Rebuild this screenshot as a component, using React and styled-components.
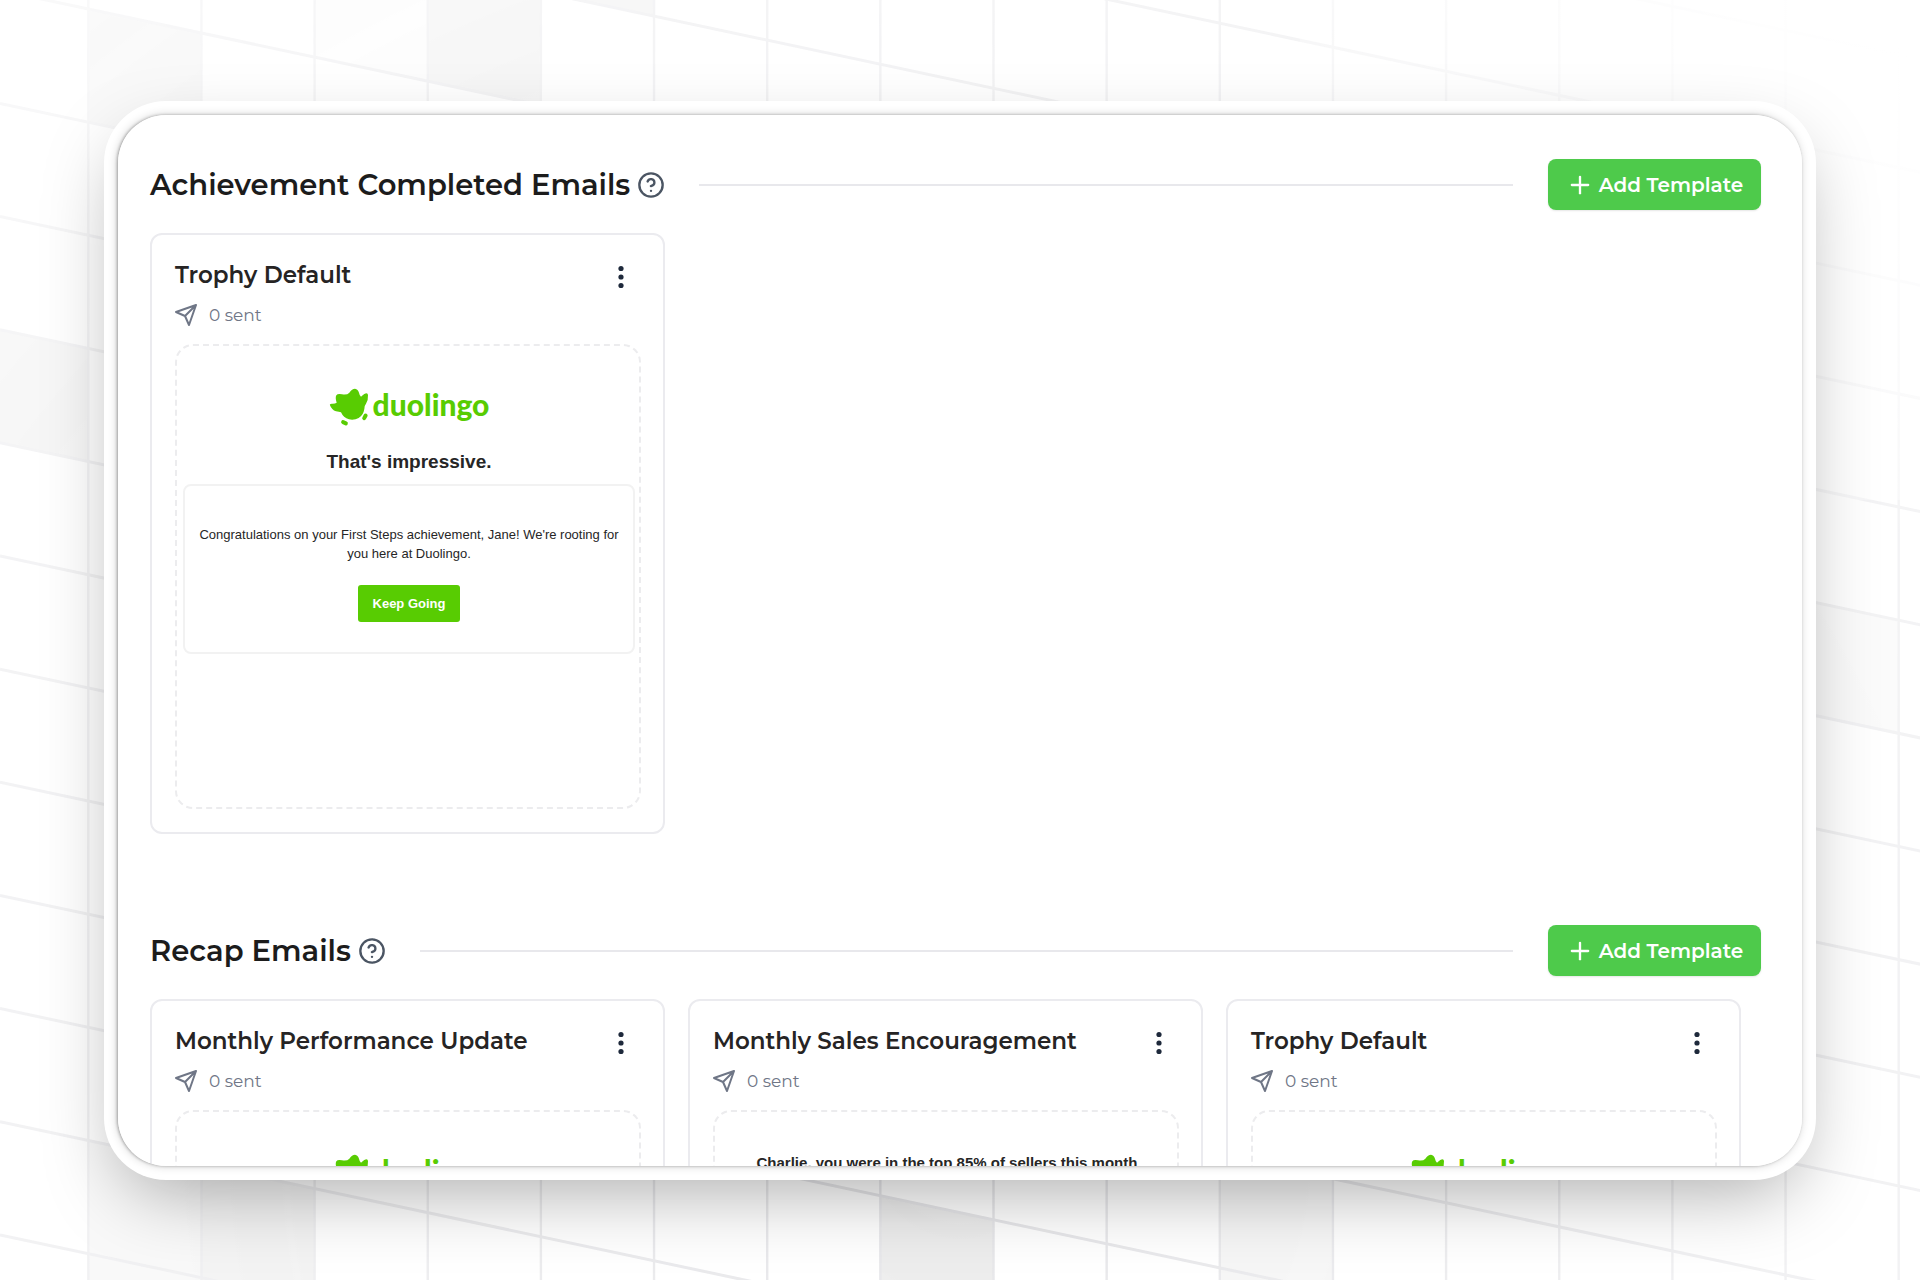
import React from 'react';
import styled, { createGlobalStyle } from 'styled-components';
import { CircleHelp, Plus } from 'lucide-react';

const GlobalStyle = createGlobalStyle`
  * {
    box-sizing: border-box;
  }
  body {
    margin: 0;
    background: #ffffff;
    font-family: Montserrat, Inter, sans-serif;
    color: #1c1c1c;
  }
  h1, h2, h3, p {
    margin: 0;
  }
`;

/* Page and frame */
const Page = styled.main`
  position: relative;
  display: flex;
  height: 100vh;
  padding: 101px 104px 100px;
  overflow: hidden;
`;

const Backdrop = styled.svg`
  position: absolute;
  inset: 0;
  width: 100%;
  height: 100%;
`;

const Frame = styled.div`
  position: relative;
  display: flex;
  flex: 1;
  min-width: 0;
  padding: 14px;
  border-radius: 62px;
  background: #ffffff;
  box-shadow: 0 28px 76px -18px rgba(0, 0, 0, 0.34);
`;

const Screen = styled.div`
  flex: 1;
  min-width: 0;
  padding: 44px 41px 44px 32px;
  border-radius: 48px;
  background: #ffffff;
  box-shadow: -1px 0 3px rgba(0, 0, 0, 0.3), -1px 0 10px rgba(0, 0, 0, 0.18);
  overflow-y: auto;
  scrollbar-width: none;
`;

/* Sections */
const Section = styled.section`
  margin-bottom: 91px;
`;

const SectionHeader = styled.header`
  display: flex;
  align-items: center;
  margin-bottom: 23px;
`;

const SectionTitle = styled.h2`
  font-size: 29px;
  line-height: 40px;
  font-weight: 600;
`;

const HelpButton = styled.button`
  display: flex;
  margin-left: 7px;
  padding: 0;
  border: 0;
  background: none;
  color: #4b5563;
`;

const Divider = styled.hr`
  flex: 1;
  height: 2px;
  margin: 0 35px 0 34px;
  border: 0;
  background: #e8e8ec;
`;

const AddButton = styled.button`
  display: flex;
  align-items: center;
  justify-content: center;
  gap: 5px;
  width: 213px;
  height: 51px;
  padding: 0;
  border: 0;
  border-radius: 8px;
  background: #4eca4b;
  box-shadow: 0 1px 2px rgba(0, 0, 0, 0.1);
  color: #ffffff;
  font-family: inherit;
  font-size: 20px;
  font-weight: 600;
`;

const CardGrid = styled.div`
  display: grid;
  grid-template-columns: repeat(3, 1fr);
  gap: 23px;
  padding-right: 20px;
`;

/* Template cards */
const Card = styled.article`
  min-width: 0;
  padding: 22px 22px 23px 23px;
  border: 2px solid #ebebef;
  border-radius: 12px;
  background: #ffffff;
`;

const CardHeader = styled.div`
  display: flex;
  align-items: center;
  justify-content: space-between;
  height: 36px;
`;

const CardTitle = styled.h3`
  font-size: 23px;
  line-height: 32px;
  font-weight: 600;
  color: #262424;
`;

const MenuButton = styled.button`
  display: flex;
  align-items: flex-end;
  justify-content: center;
  width: 40px;
  height: 36px;
  padding: 0 0 4px;
  border: 0;
  background: none;
  color: #1e293b;
`;

const SentRow = styled.div`
  display: flex;
  align-items: center;
  gap: 12px;
  height: 24px;
  margin: 10px 0 17px;
  font-size: 17px;
  line-height: 24px;
  color: #6f7686;
`;

const Preview = styled.div`
  height: 465px;
  padding: 39px 4px 0 6px;
  border: 2px dashed #ececee;
  border-radius: 18px;
  overflow: hidden;
  font-family: 'Helvetica Neue', 'Liberation Sans', Arial, sans-serif;
  text-align: center;
  color: #262626;
`;

const Logo = styled.div`
  display: flex;
  justify-content: center;
  gap: 4px;
  height: 38px;
  margin-top: 3px;
  font-family: Lato, sans-serif;
  font-size: 30px;
  line-height: 32px;
  font-weight: 900;
  color: #58cc02;
`;

const EmailTitle = styled.p`
  margin: ${(props) => (props.$small ? '0' : '24px 0 10px')};
  font-size: ${(props) => (props.$small ? '15px' : '19px')};
  line-height: 24px;
  font-weight: 700;
`;

const EmailBody = styled.div`
  height: 170px;
  padding: 39px 12px 0;
  border: 2px solid #f2f2f2;
  border-radius: 8px;
`;

const EmailText = styled.p`
  margin-bottom: 22px;
  font-size: 13px;
  line-height: 19px;
`;

const EmailButton = styled.button`
  width: 102px;
  height: 37px;
  padding: 0;
  border: 0;
  border-radius: 3px;
  background: #58cc02;
  color: #ffffff;
  font-family: inherit;
  font-size: 13px;
  font-weight: 700;
`;

const PITCH = 113.15;
const SLOPE = 0.2126;

/* [column, row, strength] of the shaded cells */
const shadedCells = [
  [0, 0, 1], [2, -1, 0.3], [3, -1, 1], [4, -2, 1], [-1, 3, 1],
  [15, 2, 0.5], [0, 10, 0.6], [0, 11, 0.6], [1, 10, 1], [1, 11, 1],
  [7, 9, 1], [10, 8, 0.6], [10, 9, 0.6],
];

function GridBackdrop() {
  const columns = Array.from({ length: 30 }, (_, i) => 88.3 + (i - 1) * PITCH);
  const rows = Array.from({ length: 26 }, (_, i) => -9.8 + (i - 6) * PITCH);

  return (
    <Backdrop aria-hidden="true">
      <defs>
        <radialGradient id="fade" gradientUnits="userSpaceOnUse" cx="960" cy="1150" r="1450">
          <stop offset="0" stopColor="#fff" />
          <stop offset="0.5" stopColor="#fff" stopOpacity="0.6" />
          <stop offset="0.8" stopColor="#fff" stopOpacity="0.45" />
          <stop offset="1" stopColor="#fff" stopOpacity="0.25" />
        </radialGradient>
        <linearGradient id="corner" gradientUnits="userSpaceOnUse" x1="1400" y1="360" x2="1780" y2="-60">
          <stop offset="0" stopColor="#fff" stopOpacity="0" />
          <stop offset="1" stopColor="#fff" />
        </linearGradient>
        <mask id="gridMask" maskUnits="userSpaceOnUse" x="0" y="0" width="4000" height="3000">
          <rect width="4000" height="3000" fill="url(#fade)" />
        </mask>
      </defs>
      <g mask="url(#gridMask)">
        {shadedCells.map(([col, row, strength]) => {
          const x = 88.3 + col * PITCH;
          const y = -9.8 + row * PITCH + x * SLOPE;
          const drop = PITCH * SLOPE;
          return (
            <path
              key={`${col}:${row}`}
              d={`M${x} ${y}l${PITCH} ${drop}v${PITCH}l${-PITCH} ${-drop}z`}
              fill="#666666"
              fillOpacity={strength * 0.12}
            />
          );
        })}
        <g stroke="#e6e6e9" fill="none">
          {columns.map((x) => <path key={x} strokeWidth="2.4" d={`M${x} 0V3000`} />)}
          {rows.map((y) => <path key={y} strokeWidth="3" d={`M0 ${y}L4000 ${y + 4000 * SLOPE}`} />)}
        </g>
      </g>
      <rect x="1300" width="700" height="500" fill="url(#corner)" />
    </Backdrop>
  );
}

function SendIcon() {
  return (
    <svg width="22" height="22" viewBox="1 1 22 22" fill="none" stroke="currentColor" strokeWidth="2" strokeLinecap="round" strokeLinejoin="round">
      <path d="M22 2 11 13M22 2l-7 20-4-9-9-4z" />
    </svg>
  );
}

function DotsIcon() {
  return (
    <svg width="6" height="24" viewBox="0 0 6 24" fill="currentColor">
      <circle cx="3" cy="3.5" r="2.6" />
      <circle cx="3" cy="12" r="2.6" />
      <circle cx="3" cy="20.5" r="2.6" />
    </svg>
  );
}

function DuolingoLogo() {
  return (
    <Logo>
      <svg width="40" height="38" viewBox="27 54 120 114" fill="currentColor">
        <path d="M30 106Q28 101 35 101Q44 102 50 98Q45 83 49 76Q53 70 66 73Q81 76 88 68Q96 56 105 56Q114 57 117 68Q119 78 123 80Q128 76 133 72Q143 67 144 75Q145 91 138 101Q132 108 133 117Q130 136 116 144Q103 151 87 148Q70 143 63 127Q57 125 48 124Q35 120 30 106Z" />
        <rect x="63" y="152" width="21" height="12" rx="6" transform="rotate(24 73 158)" />
        <rect x="124" y="134" width="21" height="12" rx="6" transform="rotate(-62 135 140)" />
      </svg>
      <span>duolingo</span>
    </Logo>
  );
}

function TemplateCard({ title, children }) {
  return (
    <Card>
      <CardHeader>
        <CardTitle>{title}</CardTitle>
        <MenuButton aria-label={`${title} options`}><DotsIcon /></MenuButton>
      </CardHeader>
      <SentRow>
        <SendIcon />
        <span>0 sent</span>
      </SentRow>
      <Preview>{children}</Preview>
    </Card>
  );
}

function EmailSection({ title, children }) {
  return (
    <Section>
      <SectionHeader>
        <SectionTitle>{title}</SectionTitle>
        <HelpButton aria-label={`About ${title}`}>
          <CircleHelp size={28} strokeWidth={2} />
        </HelpButton>
        <Divider />
        <AddButton>
          <Plus size={28} strokeWidth={2} />
          Add Template
        </AddButton>
      </SectionHeader>
      <CardGrid>{children}</CardGrid>
    </Section>
  );
}

function App() {
  return (
    <>
      <GlobalStyle />
      <Page>
        <GridBackdrop />
        <Frame>
          <Screen>
            <EmailSection title="Achievement Completed Emails">
              <TemplateCard title="Trophy Default">
                <DuolingoLogo />
                <EmailTitle>That's impressive.</EmailTitle>
                <EmailBody>
                  <EmailText>
                    Congratulations on your First Steps achievement, Jane! We're rooting for you here at Duolingo.
                  </EmailText>
                  <EmailButton>Keep Going</EmailButton>
                </EmailBody>
              </TemplateCard>
            </EmailSection>

            <EmailSection title="Recap Emails">
              <TemplateCard title="Monthly Performance Update">
                <DuolingoLogo />
              </TemplateCard>
              <TemplateCard title="Monthly Sales Encouragement">
                <EmailTitle $small>Charlie, you were in the top 85% of sellers this month</EmailTitle>
              </TemplateCard>
              <TemplateCard title="Trophy Default">
                <DuolingoLogo />
              </TemplateCard>
            </EmailSection>
          </Screen>
        </Frame>
      </Page>
    </>
  );
}

export default App;
